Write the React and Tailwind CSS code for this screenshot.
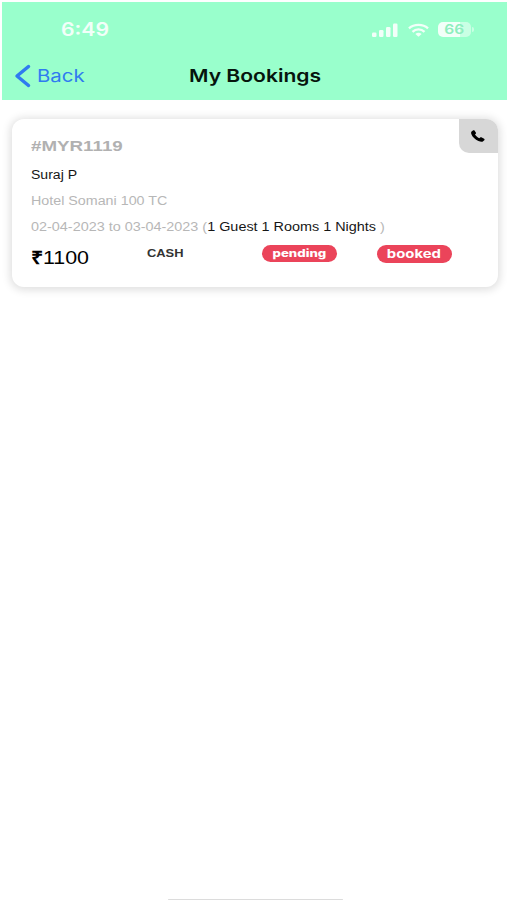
import React from 'react';

const booking = {
    id: '#MYR1119',
    guest: 'Suraj P',
    hotel: 'Hotel Somani 100 TC',
    dates: '02-04-2023 to 03-04-2023',
    summary: '1 Guest 1 Rooms 1 Nights',
    currency: '₹',
    amount: '1100',
    method: 'CASH',
    payment: 'pending',
    status: 'booked',
};

function StatusBar() {
    return (
        <div className="flex h-[55px] items-center justify-between pl-[58px] pr-[33px]">
            <span className="mt-px origin-left scale-x-[1.18] whitespace-nowrap font-['Inter'] text-[18px] font-semibold leading-none text-[#f2fff9]">
                6:49
            </span>
            <div className="flex items-center">
                <svg className="h-[14px] w-[26px]" viewBox="0 0 26 14" fill="#f2fff9">
                    <rect x="0" y="9.5" width="4.5" height="4.5" rx="1.2" />
                    <rect x="7" y="7" width="4.5" height="7" rx="1.2" />
                    <rect x="14" y="4" width="4.5" height="10" rx="1.2" />
                    <rect x="21" y="0.5" width="4.5" height="13.5" rx="1.2" />
                </svg>
                <svg className="ml-[10px] h-[14px] w-[21px]" viewBox="0 0 22 14" fill="none" stroke="#f2fff9" strokeWidth="2.4">
                    <path d="M1 5.200 C6.500 0.400 15.500 0.400 21 5.200" />
                    <path d="M4.700 9 C8.300 5.600 13.700 5.600 17.300 9" />
                    <path d="M7.700 11.200 C9.700 9.600 12.300 9.600 14.300 11.200 L11 14 Z" fill="#f2fff9" stroke="none" />
                </svg>
                <div className="ml-[9px] flex items-center">
                    <div className="flex h-[15px] w-[33px] items-center justify-center rounded-[5px] bg-[linear-gradient(90deg,#f2fff9_66%,#c9ffe4_66%)]">
                        <span className="scale-x-[1.2] font-['Inter'] text-[13px] font-semibold leading-none text-[#8deebd]">66</span>
                    </div>
                    <div className="ml-px h-[5px] w-[2px] rounded-r-full bg-[#c9ffe4]"></div>
                </div>
            </div>
        </div>
    );
}

function Header() {
    return (
        <header className="ml-[2px] mt-[2px] h-[98px] bg-[#99ffcc] pl-px">
            <StatusBar />
            <div className="flex h-[38px] items-center">
                <button className="flex w-[186px] items-center pl-[11px] text-[#2f7bf0]">
                    <svg className="h-[24px] w-[17px]" viewBox="0 0 17 24" fill="none" stroke="currentColor" strokeWidth="3.5" strokeLinecap="round" strokeLinejoin="round">
                        <path d="M14.500 2.500 L3 12 L14.500 21.500" />
                    </svg>
                    <span className="ml-[6px] origin-left scale-x-[1.2] font-['Inter'] text-[17px] leading-none">Back</span>
                </button>
                <h1 className="origin-left scale-x-[1.205] whitespace-nowrap font-['Inter'] text-[17.5px] font-semibold leading-none text-[#06150d]">
                    My Bookings
                </h1>
            </div>
        </header>
    );
}

function BookingCard({ item }) {
    return (
        <section className="ml-[12px] mr-[9px] mt-[19px] flex h-[168px] rounded-[12px] bg-white shadow-[0_1px_9px_2px_rgba(0,0,0,0.13)]">
            <div className="w-[447px] whitespace-nowrap pl-[18.5px] pt-[17px] text-[12px] text-[#b7b7b7]">
                <h2 className="w-fit origin-left scale-x-[1.25] text-[15px] font-bold leading-[19px] text-[#b1b1b1]">{item.id}</h2>
                <p className="mt-[12px] w-fit origin-left scale-x-[1.17] leading-[16px] text-[#161616]">{item.guest}</p>
                <p className="mt-[10px] w-fit origin-left scale-x-[1.19] leading-[16px]">{item.hotel}</p>
                <p className="mt-[10px] w-fit origin-left scale-x-[1.2] leading-[16px]">
                    {item.dates} (<span className="text-[#161616]">{item.summary}</span> )
                </p>
                <div className="mt-[10px] flex items-start">
                    <div className="w-[116px]">
                        <p className="w-fit origin-left scale-x-[1.19] text-[18px] leading-[27px] text-black">
                            <span className="font-bold">{item.currency}</span>
                            {item.amount}
                        </p>
                    </div>
                    <div className="w-[115px]">
                        <p className="w-fit origin-left scale-x-[1.17] text-[11px] font-bold leading-[17px] text-[#333]">{item.method}</p>
                    </div>
                    <div className="w-[115px]">
                        <div className="flex h-[17px] w-[75px] items-center justify-center rounded-full bg-[#eb445a]">
                            <span className="scale-x-[1.2] font-['Inter'] text-[11px] font-extrabold leading-none text-white">{item.payment}</span>
                        </div>
                    </div>
                    <div className="flex h-[18px] w-[75px] items-center justify-center rounded-full bg-[#eb445a]">
                        <span className="scale-x-[1.24] font-['Inter'] text-[12px] font-bold leading-none text-white">{item.status}</span>
                    </div>
                </div>
            </div>
            <button className="flex h-[34px] w-[39px] items-center justify-center rounded-bl-[10px] rounded-tr-[12px] bg-[#d7d7d7]">
                <svg className="h-[12px] w-[14px] -translate-x-px" viewBox="0 0 14 12" fill="black">
                    <path d="M0.600 1.600 L1.900 0.500 C2.500 0 3.100 0.100 3.500 0.600 L4.800 2.400 C5.200 2.900 5.100 3.400 4.700 3.800 L4 4.500 C4.900 6 6.400 7.300 8.300 8.200 L9.100 7.600 C9.600 7.200 10.200 7.100 10.800 7.500 L13.100 8.700 C13.700 9.100 13.800 9.700 13.300 10.200 L12.100 11.300 C11.300 12.100 9.300 11.900 7.400 11 C4.200 9.500 1.300 7 0.300 4 C0 3 0 2.200 0.600 1.600 Z" />
                </svg>
            </button>
        </section>
    );
}

export default function App() {
    return (
        <div className="flex h-[900px] w-[507px] flex-col overflow-hidden bg-white font-['Liberation_Sans',sans-serif]">
            <Header />
            <main className="flex-1">
                <BookingCard item={booking} />
            </main>
            {/* Home indicator */}
            <div className="mx-auto h-[1px] w-[175px] translate-x-[2px] rounded-full bg-[#dcdcdc]"></div>
        </div>
    );
}
